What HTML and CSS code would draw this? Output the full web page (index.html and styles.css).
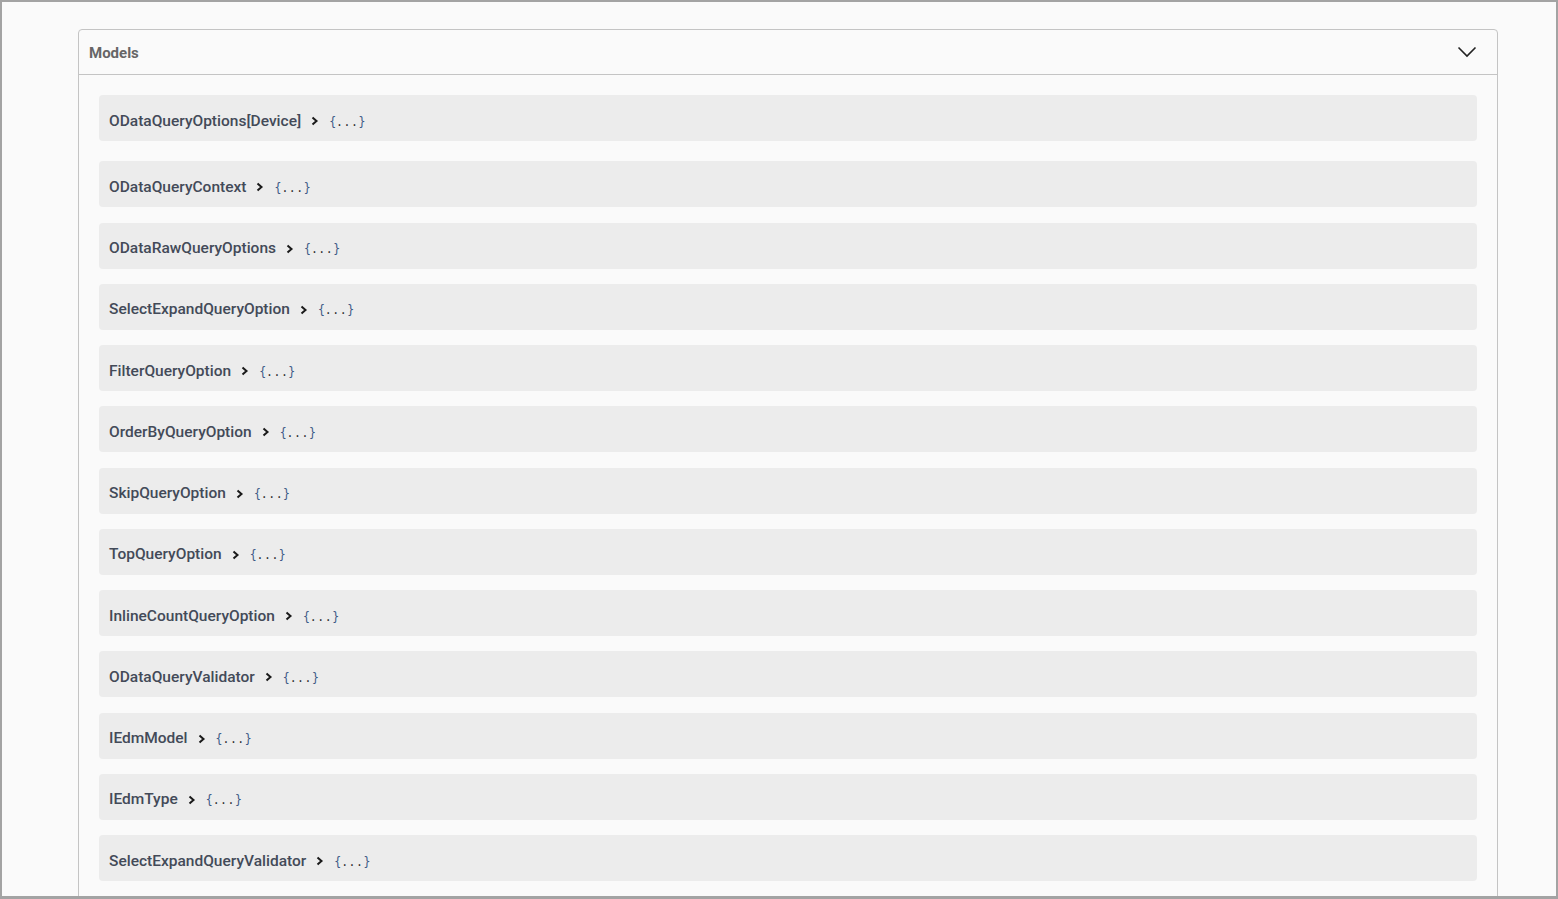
FILE: index.html
```html
<!DOCTYPE html>
<html>
<head>
<meta charset="utf-8">
<link rel="stylesheet" href="styles.css">
</head>
<body>
<div class="frame">
  <section class="models">
    <div class="models-head">
      <span class="models-title">Models</span>
      <svg class="collapse" width="20" height="12" viewBox="0 0 20 12"><path d="M1.5 1.5 L10 10 L18.5 1.5" fill="none" stroke="#222" stroke-width="1.6"/></svg>
    </div>
    <div class="models-body">
      <div class="model first"><span class="name">ODataQueryOptions[Device]</span><svg class="arrow" width="8" height="10" viewBox="0 0 8 10"><path d="M1.5 1.5 L5.5 5 L1.5 8.5" fill="none" stroke="#1a1a1a" stroke-width="2"/></svg><span class="brace">{</span><span class="dots">...</span><span class="brace">}</span></div>
      <div class="model"><span class="name">ODataQueryContext</span><svg class="arrow" width="8" height="10" viewBox="0 0 8 10"><path d="M1.5 1.5 L5.5 5 L1.5 8.5" fill="none" stroke="#1a1a1a" stroke-width="2"/></svg><span class="brace">{</span><span class="dots">...</span><span class="brace">}</span></div>
      <div class="model"><span class="name">ODataRawQueryOptions</span><svg class="arrow" width="8" height="10" viewBox="0 0 8 10"><path d="M1.5 1.5 L5.5 5 L1.5 8.5" fill="none" stroke="#1a1a1a" stroke-width="2"/></svg><span class="brace">{</span><span class="dots">...</span><span class="brace">}</span></div>
      <div class="model"><span class="name">SelectExpandQueryOption</span><svg class="arrow" width="8" height="10" viewBox="0 0 8 10"><path d="M1.5 1.5 L5.5 5 L1.5 8.5" fill="none" stroke="#1a1a1a" stroke-width="2"/></svg><span class="brace">{</span><span class="dots">...</span><span class="brace">}</span></div>
      <div class="model"><span class="name">FilterQueryOption</span><svg class="arrow" width="8" height="10" viewBox="0 0 8 10"><path d="M1.5 1.5 L5.5 5 L1.5 8.5" fill="none" stroke="#1a1a1a" stroke-width="2"/></svg><span class="brace">{</span><span class="dots">...</span><span class="brace">}</span></div>
      <div class="model"><span class="name">OrderByQueryOption</span><svg class="arrow" width="8" height="10" viewBox="0 0 8 10"><path d="M1.5 1.5 L5.5 5 L1.5 8.5" fill="none" stroke="#1a1a1a" stroke-width="2"/></svg><span class="brace">{</span><span class="dots">...</span><span class="brace">}</span></div>
      <div class="model"><span class="name">SkipQueryOption</span><svg class="arrow" width="8" height="10" viewBox="0 0 8 10"><path d="M1.5 1.5 L5.5 5 L1.5 8.5" fill="none" stroke="#1a1a1a" stroke-width="2"/></svg><span class="brace">{</span><span class="dots">...</span><span class="brace">}</span></div>
      <div class="model"><span class="name">TopQueryOption</span><svg class="arrow" width="8" height="10" viewBox="0 0 8 10"><path d="M1.5 1.5 L5.5 5 L1.5 8.5" fill="none" stroke="#1a1a1a" stroke-width="2"/></svg><span class="brace">{</span><span class="dots">...</span><span class="brace">}</span></div>
      <div class="model"><span class="name">InlineCountQueryOption</span><svg class="arrow" width="8" height="10" viewBox="0 0 8 10"><path d="M1.5 1.5 L5.5 5 L1.5 8.5" fill="none" stroke="#1a1a1a" stroke-width="2"/></svg><span class="brace">{</span><span class="dots">...</span><span class="brace">}</span></div>
      <div class="model"><span class="name">ODataQueryValidator</span><svg class="arrow" width="8" height="10" viewBox="0 0 8 10"><path d="M1.5 1.5 L5.5 5 L1.5 8.5" fill="none" stroke="#1a1a1a" stroke-width="2"/></svg><span class="brace">{</span><span class="dots">...</span><span class="brace">}</span></div>
      <div class="model"><span class="name">IEdmModel</span><svg class="arrow" width="8" height="10" viewBox="0 0 8 10"><path d="M1.5 1.5 L5.5 5 L1.5 8.5" fill="none" stroke="#1a1a1a" stroke-width="2"/></svg><span class="brace">{</span><span class="dots">...</span><span class="brace">}</span></div>
      <div class="model"><span class="name">IEdmType</span><svg class="arrow" width="8" height="10" viewBox="0 0 8 10"><path d="M1.5 1.5 L5.5 5 L1.5 8.5" fill="none" stroke="#1a1a1a" stroke-width="2"/></svg><span class="brace">{</span><span class="dots">...</span><span class="brace">}</span></div>
      <div class="model"><span class="name">SelectExpandQueryValidator</span><svg class="arrow" width="8" height="10" viewBox="0 0 8 10"><path d="M1.5 1.5 L5.5 5 L1.5 8.5" fill="none" stroke="#1a1a1a" stroke-width="2"/></svg><span class="brace">{</span><span class="dots">...</span><span class="brace">}</span></div>
    </div>
  </section>
</div>
</body>
</html>
```

FILE: styles.css
```css
html, body {
  margin: 0;
  padding: 0;
  background: #fafafa;
}
.frame {
  box-sizing: border-box;
  width: 1558px;
  height: 899px;
  border: 2px solid #a3a3a3;
  border-bottom-width: 3px;
  padding: 27px 0 0 76px;
  overflow: hidden;
  font-family: Roboto, "Liberation Sans", sans-serif;
}
.models {
  width: 1420px;
  box-sizing: border-box;
  border: 1px solid #c4c4c4;
  border-radius: 4px;
  background: #fafafa;
}
.models-head {
  height: 45px;
  display: flex;
  align-items: center;
  justify-content: space-between;
  padding: 2px 20px 0 10px;
  box-sizing: border-box;
  border-bottom: 1px solid #c4c4c4;
}
.models-title {
  font-size: 15px;
  font-weight: 700;
  color: #666;
}
.collapse {
  display: block;
  margin-top: -2px;
}
.models-body {
  padding: 20px 20px;
  display: flex;
  flex-direction: column;
  gap: 15.27px;
}
.model {
  height: 46px;
  box-sizing: border-box;
  padding: 5px 10px 0 10px;
  background: #ececec;
  border-radius: 4px;
  display: flex;
  align-items: center;
  font-size: 15.5px;
  color: #3b4151;
}
.model.first {
  margin-bottom: 5px;
}
.name {
  font-weight: 500;
  color: #434a58;
}
.arrow {
  display: block;
  margin: 1px 10px 0 10px;
}
.brace, .dots {
  font-family: "DejaVu Sans Mono", monospace;
  font-size: 11.5px;
  margin-top: 2px;
}
.brace {
  color: #3d5a86;
}
.dots {
  color: #333;
  letter-spacing: 0.5px;
}
```
